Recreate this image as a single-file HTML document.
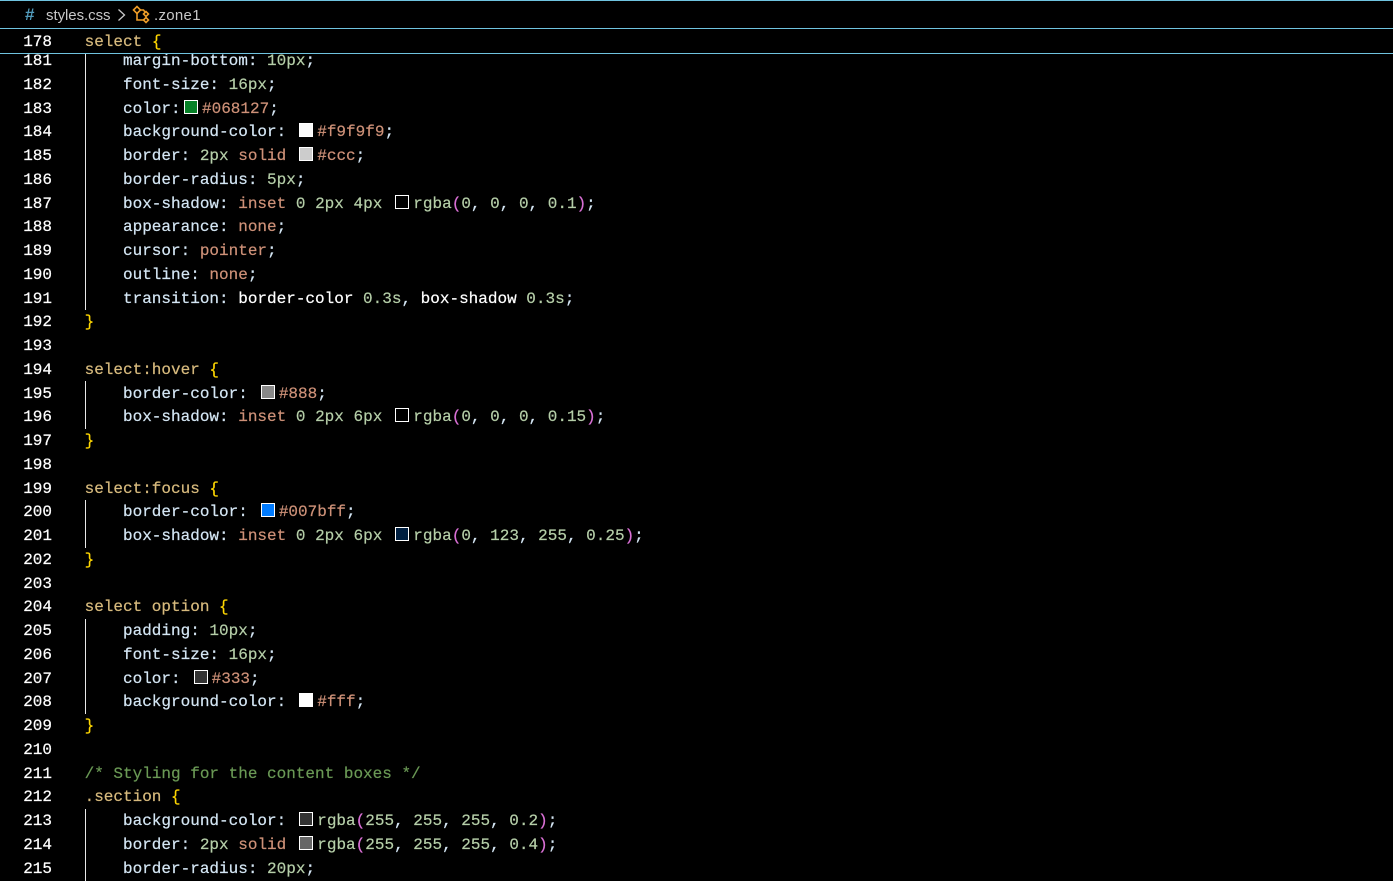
<!DOCTYPE html>
<html><head><meta charset="utf-8"><style>
html,body{margin:0;padding:0;background:#000;width:1393px;height:881px;overflow:hidden}
body{position:relative;font-family:"Liberation Mono","DejaVu Sans Mono",monospace;font-size:16px;color:#d4e6f4}
.hl{position:absolute;left:0;width:1393px;height:1px;background:#6fc3df;z-index:5}
.g{position:absolute;left:85px;width:1px;background:#e8e8e8}
#code{position:absolute;left:0;top:50.1px;width:1393px;-webkit-text-stroke:.2px}
.l{position:relative;height:23.75px;line-height:23.75px;white-space:pre}
.n{position:absolute;left:0;width:52px;text-align:right;color:#fff}
.t{position:absolute;left:84.6px}
i{font-style:normal}
.s{color:#ce9178}.d{color:#b5cea8}.b{color:#ffd700}.p{color:#da70d6}.c{color:#6a9955}.w{color:#fff}.k{color:#d7ba7d}.r{color:#b5cea8}
.x{display:inline-block;box-sizing:border-box;width:14px;height:14px;margin:0 4px 0 3.4px;border:1px solid #fff;vertical-align:-1px;-webkit-text-stroke:0}
#sticky{position:absolute;left:0;top:30px;width:1393px;height:23px;background:#000;z-index:4;line-height:24px;white-space:pre;-webkit-text-stroke:.2px}
#bar{position:absolute;left:0;top:1px;width:1393px;height:27px;background:#000;z-index:4;font-family:"Liberation Sans",sans-serif;font-size:15px;color:#c8c8c8}
#bar span{position:absolute;top:6px;line-height:18px;white-space:pre}
</style></head><body>
<div class="hl" style="top:0"></div>
<div class="hl" style="top:28px"></div>
<div class="hl" style="top:53px"></div>
<div id="bar">
<span style="left:25px;top:5px;color:#519aba;font-weight:bold;font-size:17px">#</span>
<span style="left:46px;letter-spacing:-.05px">styles.css</span>
<svg style="position:absolute;left:116px;top:7px" width="11" height="14" viewBox="0 0 11 14"><path d="M2.5 1.5 8.5 7 2.5 12.5" fill="none" stroke="#c8c8c8" stroke-width="1.3"/></svg>
<svg style="position:absolute;left:132px;top:4px" width="19" height="20" viewBox="0 0 19 20" fill="none" stroke="#ee9d28" stroke-width="1.6"><path d="M1.5 5 5 1.5 8.5 5 5 8.5Z"/><path d="M8.5 5H11.5L13 7"/><path d="M5 8.5V15H11.5"/><path d="M11.5 9 14 6.5 16.5 9 14 11.5Z"/><path d="M11.5 15 14 12.5 16.5 15 14 17.5Z"/></svg>
<span style="left:154px;letter-spacing:.3px">.zone1</span>
</div>
<div id="sticky"><span class="n">178</span><span class="t"><i class="k">select</i> <i class="b">{</i></span></div>
<div class="g" style="top:54px;height:256px"></div>
<div class="g" style="top:381px;height:48px"></div>
<div class="g" style="top:500px;height:48px"></div>
<div class="g" style="top:619px;height:95px"></div>
<div class="g" style="top:809px;height:72px"></div>
<div id="code">
<div class="l"><span class="n">181</span><span class="t">    margin-bottom: <i class="d">10px</i>;</span></div>
<div class="l"><span class="n">182</span><span class="t">    font-size: <i class="d">16px</i>;</span></div>
<div class="l"><span class="n">183</span><span class="t">    color:<i class="x" style="background:#068127"></i><i class="s">#068127</i>;</span></div>
<div class="l"><span class="n">184</span><span class="t">    background-color: <i class="x" style="background:#f9f9f9"></i><i class="s">#f9f9f9</i>;</span></div>
<div class="l"><span class="n">185</span><span class="t">    border: <i class="d">2px</i> <i class="s">solid</i> <i class="x" style="background:#ccc"></i><i class="s">#ccc</i>;</span></div>
<div class="l"><span class="n">186</span><span class="t">    border-radius: <i class="d">5px</i>;</span></div>
<div class="l"><span class="n">187</span><span class="t">    box-shadow: <i class="s">inset</i> <i class="d">0</i> <i class="d">2px</i> <i class="d">4px</i> <i class="x" style="background:#000"></i><i class="r">rgba</i><i class="p">(</i><i class="d">0</i>, <i class="d">0</i>, <i class="d">0</i>, <i class="d">0.1</i><i class="p">)</i>;</span></div>
<div class="l"><span class="n">188</span><span class="t">    appearance: <i class="s">none</i>;</span></div>
<div class="l"><span class="n">189</span><span class="t">    cursor: <i class="s">pointer</i>;</span></div>
<div class="l"><span class="n">190</span><span class="t">    outline: <i class="s">none</i>;</span></div>
<div class="l"><span class="n">191</span><span class="t">    transition: <i class="w">border-color</i> <i class="d">0.3s</i>, <i class="w">box-shadow</i> <i class="d">0.3s</i>;</span></div>
<div class="l"><span class="n">192</span><span class="t"><i class="b">}</i></span></div>
<div class="l"><span class="n">193</span></div>
<div class="l"><span class="n">194</span><span class="t"><i class="k">select:hover</i> <i class="b">{</i></span></div>
<div class="l"><span class="n">195</span><span class="t">    border-color: <i class="x" style="background:#888"></i><i class="s">#888</i>;</span></div>
<div class="l"><span class="n">196</span><span class="t">    box-shadow: <i class="s">inset</i> <i class="d">0</i> <i class="d">2px</i> <i class="d">6px</i> <i class="x" style="background:#000"></i><i class="r">rgba</i><i class="p">(</i><i class="d">0</i>, <i class="d">0</i>, <i class="d">0</i>, <i class="d">0.15</i><i class="p">)</i>;</span></div>
<div class="l"><span class="n">197</span><span class="t"><i class="b">}</i></span></div>
<div class="l"><span class="n">198</span></div>
<div class="l"><span class="n">199</span><span class="t"><i class="k">select:focus</i> <i class="b">{</i></span></div>
<div class="l"><span class="n">200</span><span class="t">    border-color: <i class="x" style="background:#007bff"></i><i class="s">#007bff</i>;</span></div>
<div class="l"><span class="n">201</span><span class="t">    box-shadow: <i class="s">inset</i> <i class="d">0</i> <i class="d">2px</i> <i class="d">6px</i> <i class="x" style="background:#001f40"></i><i class="r">rgba</i><i class="p">(</i><i class="d">0</i>, <i class="d">123</i>, <i class="d">255</i>, <i class="d">0.25</i><i class="p">)</i>;</span></div>
<div class="l"><span class="n">202</span><span class="t"><i class="b">}</i></span></div>
<div class="l"><span class="n">203</span></div>
<div class="l"><span class="n">204</span><span class="t"><i class="k">select option</i> <i class="b">{</i></span></div>
<div class="l"><span class="n">205</span><span class="t">    padding: <i class="d">10px</i>;</span></div>
<div class="l"><span class="n">206</span><span class="t">    font-size: <i class="d">16px</i>;</span></div>
<div class="l"><span class="n">207</span><span class="t">    color: <i class="x" style="background:#333"></i><i class="s">#333</i>;</span></div>
<div class="l"><span class="n">208</span><span class="t">    background-color: <i class="x" style="background:#fff"></i><i class="s">#fff</i>;</span></div>
<div class="l"><span class="n">209</span><span class="t"><i class="b">}</i></span></div>
<div class="l"><span class="n">210</span></div>
<div class="l"><span class="n">211</span><span class="t"><i class="c">/* Styling for the content boxes */</i></span></div>
<div class="l"><span class="n">212</span><span class="t"><i class="k">.section</i> <i class="b">{</i></span></div>
<div class="l"><span class="n">213</span><span class="t">    background-color: <i class="x" style="background:#333"></i><i class="r">rgba</i><i class="p">(</i><i class="d">255</i>, <i class="d">255</i>, <i class="d">255</i>, <i class="d">0.2</i><i class="p">)</i>;</span></div>
<div class="l"><span class="n">214</span><span class="t">    border: <i class="d">2px</i> <i class="s">solid</i> <i class="x" style="background:#666"></i><i class="r">rgba</i><i class="p">(</i><i class="d">255</i>, <i class="d">255</i>, <i class="d">255</i>, <i class="d">0.4</i><i class="p">)</i>;</span></div>
<div class="l"><span class="n">215</span><span class="t">    border-radius: <i class="d">20px</i>;</span></div>
</div>
</body></html>
